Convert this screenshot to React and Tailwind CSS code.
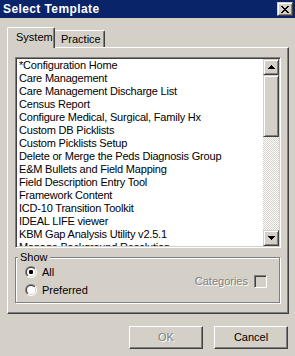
import React from 'react';

const items = [
  '*Configuration Home',
  'Care Management',
  'Care Management Discharge List',
  'Census Report',
  'Configure Medical, Surgical, Family Hx',
  'Custom DB Picklists',
  'Custom Picklists Setup',
  'Delete or Merge the Peds Diagnosis Group',
  'E&M Bullets and Field Mapping',
  'Field Description Entry Tool',
  'Framework Content',
  'ICD-10 Transition Toolkit',
  'IDEAL LIFE viewer',
  'KBM Gap Analysis Utility v2.5.1',
  'Manage Background Resolution',
];

// classic 3d raised edge
const raised =
  'bg-[#d4d0c8] border border-t-[#d4d0c8] border-l-[#d4d0c8] border-r-[#404040] border-b-[#404040] shadow-[inset_1px_1px_0_#ffffff,inset_-1px_-1px_0_#808080]';
const sunken =
  'border border-t-[#808080] border-l-[#808080] border-r-white border-b-white shadow-[inset_1px_1px_0_#404040,inset_-1px_-1px_0_#d4d0c8]';

function Arrow({ down }) {
  return (
    <svg width="7" height="4" viewBox="0 0 7 4" shapeRendering="crispEdges" className={down ? 'rotate-180' : ''}>
      <path d="M3 0h1v1h-1z M2 1h3v1h-3z M1 2h5v1h-5z M0 3h7v1h-7z" fill="#000" />
    </svg>
  );
}

function CloseGlyph() {
  return (
    <svg width="8" height="7" viewBox="0 0 8 7" shapeRendering="crispEdges">
      <path
        d="M0 0h2v1h-2z M6 0h2v1h-2z M1 1h2v1h-2z M5 1h2v1h-2z M2 2h4v1h-4z M3 3h2v1h-2z M2 4h4v1h-4z M1 5h2v1h-2z M5 5h2v1h-2z M0 6h2v1h-2z M6 6h2v1h-2z"
        fill="#000"
      />
    </svg>
  );
}

function Radio({ checked }) {
  return (
    <svg width="12" height="12" viewBox="0 0 12 12">
      <defs>
        <linearGradient id="ro" x1="0" y1="0" x2="1" y2="1">
          <stop offset="0.5" stopColor="#808080" />
          <stop offset="0.5" stopColor="#ffffff" />
        </linearGradient>
        <linearGradient id="ri" x1="0" y1="0" x2="1" y2="1">
          <stop offset="0.5" stopColor="#404040" />
          <stop offset="0.5" stopColor="#d4d0c8" />
        </linearGradient>
      </defs>
      <circle cx="6" cy="6" r="6" fill="url(#ro)" />
      <circle cx="6" cy="6" r="5" fill="url(#ri)" />
      <circle cx="6" cy="6" r="4" fill="#ffffff" />
      {checked && <rect x="4" y="4" width="4" height="4" rx="1.2" fill="#000" />}
    </svg>
  );
}

export default function App() {
  return (
    <div className="w-[295px] h-[356px] bg-[#d4d0c8] overflow-hidden font-['Liberation_Sans',Arial,sans-serif] text-[11px] leading-[13px] text-black select-none">
      {/* title bar */}
      <div className="h-[18px] bg-[#0a246a] flex items-center justify-between pl-[3px] pr-[2px]">
        <span className="text-white font-bold text-[12px] leading-[14px] tracking-[0.4px]">Select Template</span>
        <div className={`w-[16px] h-[14px] flex items-center justify-center ${raised}`}>
          <CloseGlyph />
        </div>
      </div>

      {/* tabs */}
      <div className="mt-[9px] ml-[7px] h-[21px] flex items-end relative z-10">
        <div className="w-[48px] h-[21px] bg-[#d4d0c8] border-l border-t border-l-white border-t-white border-r border-r-[#404040] rounded-t-[2px] shadow-[inset_-1px_0_0_#808080] pl-[8px] pt-[3px]">
          System
        </div>
        <div className="w-[50px] h-[17px] mb-px border-t border-t-white border-r border-r-[#404040] rounded-tr-[2px] shadow-[inset_-1px_0_0_#808080] pl-[6px] pt-[2px]">
          Practice
        </div>
      </div>

      {/* tab panel */}
      <div className="ml-[7px] -mt-px w-[282px] h-[267px] border-l border-t border-l-white border-t-white border-r border-b border-r-[#404040] border-b-[#404040] shadow-[inset_-1px_-1px_0_#808080] pl-[7px] pt-[9px]">
        {/* listbox */}
        <div className={`w-[266px] h-[191px] p-px bg-white ${sunken}`}>
          <div className="flex h-full">
            <div className="flex-1 overflow-hidden bg-white">
              {items.map((t) => (
                <div key={t} className="h-[13px] pl-[2px] whitespace-nowrap tracking-[-0.2px]">
                  {t}
                </div>
              ))}
            </div>
            <div className="w-[16px] flex flex-col">
              <div className={`h-[16px] flex items-center justify-center ${raised}`}>
                <Arrow />
              </div>
              <div className={`h-[62px] ${raised}`} />
              <div className="flex-1 bg-[image:repeating-conic-gradient(#ffffff_0_25%,#d4d0c8_0_50%)] bg-[length:2px_2px]" />
              <div className={`h-[16px] flex items-center justify-center ${raised}`}>
                <Arrow down />
              </div>
            </div>
          </div>
        </div>

        {/* Show group */}
        <div className="mt-[9px] relative w-[265px] h-[46px] border border-[#808080] shadow-[inset_1px_1px_0_#ffffff,1px_1px_0_#ffffff] flex items-center pl-[9px] pr-[12px]">
          <span className="absolute left-[2px] top-[-7px] px-[2px] bg-[#d4d0c8]">Show</span>
          <div className="self-start mt-[6px] flex flex-col gap-[2px]">
            <div className="h-[16px] flex items-center gap-[5px]">
              <Radio checked />
              <span>All</span>
            </div>
            <div className="h-[16px] flex items-center gap-[5px]">
              <Radio />
              <span>Preferred</span>
            </div>
          </div>
          <div className="ml-auto mt-[2px] flex items-center gap-[6px]">
            <span className="text-[#808080] [text-shadow:1px_1px_0_#ffffff]">Categories</span>
            <div className={`w-[13px] h-[13px] bg-[#d4d0c8] ${sunken}`} />
          </div>
        </div>
      </div>

      {/* buttons */}
      <div className="mt-[12px] flex justify-end gap-[11px] pr-[7px]">
        <div className="w-[74px] h-[23px] bg-[#d4d0c8] border-l border-t border-l-white border-t-white border-r border-b border-r-[#404040] border-b-[#404040] shadow-[inset_-1px_-1px_0_#808080] flex items-center justify-center text-[#808080] [text-shadow:1px_1px_0_#ffffff]">
          OK
        </div>
        <div className="w-[74px] h-[23px] bg-[#d4d0c8] border-l border-t border-l-white border-t-white border-r border-b border-r-[#404040] border-b-[#404040] shadow-[inset_-1px_-1px_0_#808080] flex items-center justify-center">
          Cancel
        </div>
      </div>
    </div>
  );
}
